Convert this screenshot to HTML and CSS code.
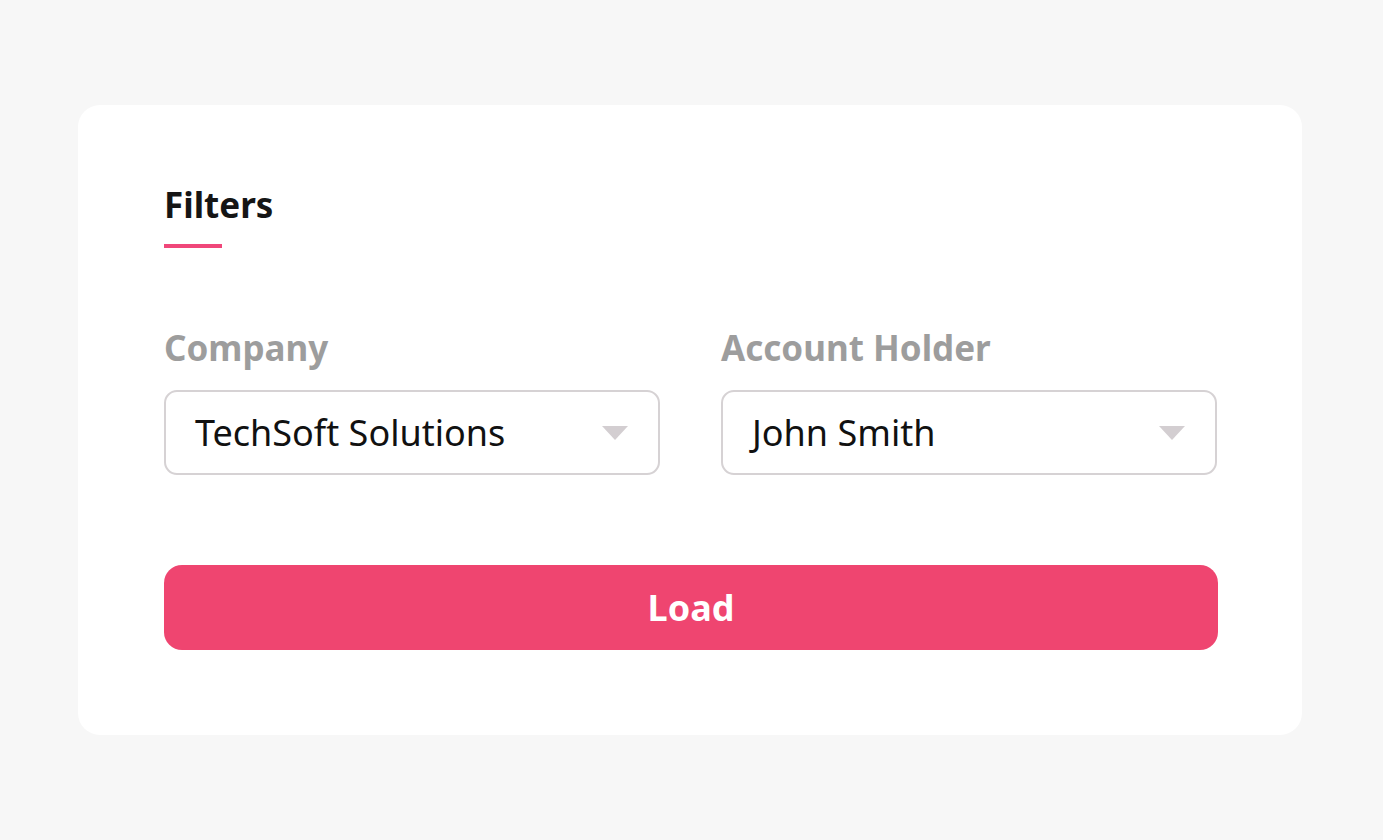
FILE: index.html
```html
<!DOCTYPE html>
<html>
<head>
<meta charset="utf-8">
<link rel="stylesheet" href="styles.css">
</head>
<body>
<div class="card">
  <div class="tab">
    <h2 class="tab-title">Filters</h2>
    <div class="tab-line"></div>
  </div>
  <div class="fields">
    <div class="field">
      <label class="label">Company</label>
      <div class="select">
        <span class="value">TechSoft Solutions</span>
        <svg class="caret" width="26" height="14" viewBox="0 0 26 14"><path d="M0 0 H26 L13 14 Z" fill="#d3ced1"/></svg>
      </div>
    </div>
    <div class="field">
      <label class="label">Account Holder</label>
      <div class="select">
        <span class="value">John Smith</span>
        <svg class="caret" width="26" height="14" viewBox="0 0 26 14"><path d="M0 0 H26 L13 14 Z" fill="#d3ced1"/></svg>
      </div>
    </div>
  </div>
  <button class="btn">Load</button>
</div>
</body>
</html>
```
FILE: styles.css
```css
* { box-sizing: border-box; }
html, body { margin: 0; padding: 0; }
body {
  background: #f7f7f7;
  font-family: "Noto Sans", "Open Sans", sans-serif;
  padding: 105px 0 0 78px;
}
.card {
  width: 1224px;
  height: 630px;
  background: #fff;
  border-radius: 22px;
  padding: 74px 85px 0 86px;
}
.tab-title {
  margin: 0;
  font-size: 35px;
  font-weight: 700;
  color: #151515;
  line-height: 52px;
}
.tab-line {
  width: 58px;
  height: 4px;
  background: #f0477a;
  margin-top: 13px;
}
.fields {
  display: flex;
  gap: 61px;
  margin-top: 78px;
}
.field { width: 496px; display: flex; flex-direction: column; }
.label {
  font-size: 35px;
  font-weight: 700;
  color: #9d9d9d;
  line-height: 44px;
}
.select {
  margin-top: 20px;
  height: 85px;
  border: 2px solid #d6d2d4;
  border-radius: 13px;
  display: flex;
  align-items: center;
  justify-content: space-between;
  padding: 0 30px 0 29px;
}
.value {
  font-size: 36px;
  color: #111;
}
.caret { display: block; }
.btn {
  margin-top: 90px;
  width: 1054px;
  height: 85px;
  border: 0;
  border-radius: 18px;
  background: #ef4570;
  color: #fff;
  font-family: inherit;
  font-size: 36px;
  font-weight: 700;
  display: block;
}
```
